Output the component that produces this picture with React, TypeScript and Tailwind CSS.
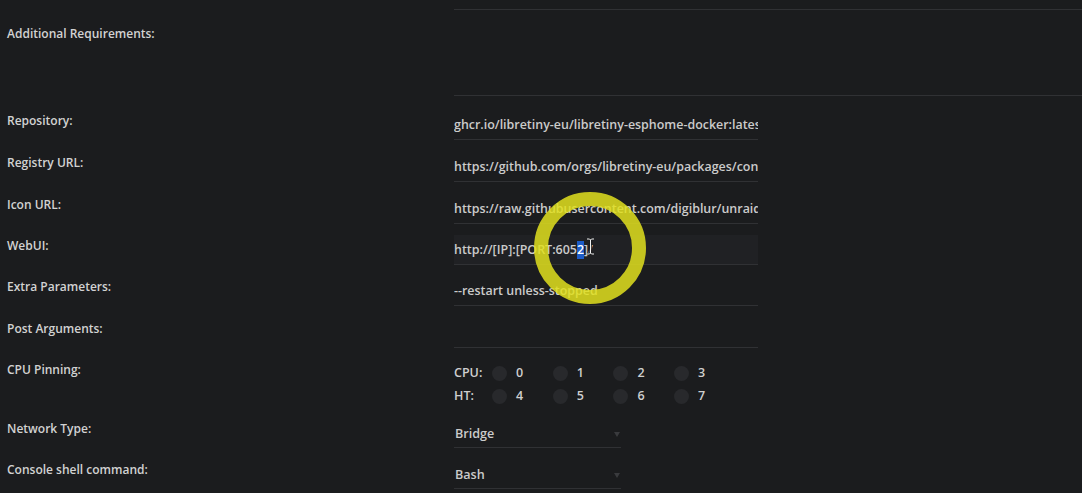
import React from "react"

const font = { fontFamily: '"Open Sans", "Noto Sans", sans-serif' }

function Row({
  label,
  h,
  children,
}: {
  label: string
  h: string
  children: React.ReactNode
}) {
  return (
    <div className={`grid grid-cols-[447px_1fr] items-end ${h}`}>
      <div className="pb-[11px] leading-4 font-semibold text-[#d2d2d2]">{label}</div>
      {children}
    </div>
  )
}

function TextInput({ value, focused }: { value?: React.ReactNode; focused?: boolean }) {
  return (
    <div
      className={`flex h-[30px] w-[304px] items-center overflow-hidden whitespace-nowrap border-b border-[#303134] pt-[1px] text-[12.45px] text-[#cbcbcb] font-semibold ${
        focused ? "bg-[#202124]" : ""
      }`}
    >
      {value}
    </div>
  )
}

function Select({ value }: { value: string }) {
  return (
    <div className="flex h-[30px] w-[167px] items-center justify-between border-b border-[#303134] pt-[3px] pl-[1px] font-semibold text-[12.6px] text-[#cbcbcb]">
      <span>{value}</span>
      <svg width="6" height="5" viewBox="0 0 6 5" className="mr-[1px]">
        <path d="M0 0h6L3 5z" fill="#3a3b3e" />
      </svg>
    </div>
  )
}

function Pin({ n }: { n: number }) {
  return (
    <div className="flex w-[60.7px] items-center gap-[9px]">
      <span className="h-[15px] w-[15px] rounded-full bg-[#28292c]" />
      <span>{n}</span>
    </div>
  )
}

export default function App() {
  return (
    <div
      className="relative h-[493px] w-full overflow-hidden bg-[#1b1c1e] pl-[7px] text-[12px]"
      style={font}
    >
      <div className="pt-[9px]">
        <div className="grid grid-cols-[447px_1fr]">
          <div className="pt-[17px] leading-4 font-semibold text-[#d2d2d2]">
            Additional Requirements:
          </div>
          <div className="h-[87px] border-y border-[#303134]" />
        </div>

        <Row label="Repository:" h="h-[44px]">
          <TextInput value="ghcr.io/libretiny-eu/libretiny-esphome-docker:latest" />
        </Row>
        <Row label="Registry URL:" h="h-[42px]">
          <TextInput value="https://github.com/orgs/libretiny-eu/packages/container/package/libretiny-esphome-docker" />
        </Row>
        <Row label="Icon URL:" h="h-[42px]">
          <TextInput value="https://raw.githubusercontent.com/digiblur/unraid-templates/main/images/libretiny.png" />
        </Row>
        <Row label="WebUI:" h="h-[41px]">
          <TextInput
            focused
            value={
              <>
                http://[IP]:[PORT:605
                <span className="bg-[#1d5cc8] text-white">2</span>
                ]/
              </>
            }
          />
        </Row>
        <Row label="Extra Parameters:" h="h-[41px]">
          <TextInput value="--restart unless-stopped" />
        </Row>
        <Row label="Post Arguments:" h="h-[42px]">
          <TextInput />
        </Row>

        <div className="grid h-[58px] grid-cols-[447px_1fr]">
          <div className="pt-[14px] leading-4 font-semibold text-[#d2d2d2]">CPU Pinning:</div>
          <div className="flex flex-col gap-[7px] pt-[17px] leading-4 font-semibold text-[12.5px] text-[#cfcfcf]">
            <div className="flex items-center">
              <span className="w-[38px]">CPU:</span>
              {[0, 1, 2, 3].map((n) => (
                <Pin key={n} n={n} />
              ))}
            </div>
            <div className="flex items-center">
              <span className="w-[38px]">HT:</span>
              {[4, 5, 6, 7].map((n) => (
                <Pin key={n} n={n} />
              ))}
            </div>
          </div>
        </div>

        <Row label="Network Type:" h="h-[42px]">
          <Select value="Bridge" />
        </Row>
        <Row label="Console shell command:" h="h-[41px]">
          <Select value="Bash" />
        </Row>
      </div>

      {/* click highlight ring from the recording */}
      <div className="pointer-events-none absolute left-[534px] top-[192px] h-[112px] w-[112px] rounded-full border-[14px] border-[#e2e01e]/85" />
      <svg
        className="pointer-events-none absolute left-[586px] top-[238px]"
        width="9"
        height="17"
        viewBox="0 0 9 17"
      >
        <path
          d="M1 1h2.5l1 1 1-1H8M4.5 2v13M1 16h2.5l1-1 1 1H8"
          fill="none"
          stroke="#1b1c1e"
          strokeWidth="2.5"
        />
        <path
          d="M1 1h2.5l1 1 1-1H8M4.5 2v13M1 16h2.5l1-1 1 1H8"
          fill="none"
          stroke="#f2f2f2"
          strokeWidth="1"
        />
      </svg>
    </div>
  )
}
